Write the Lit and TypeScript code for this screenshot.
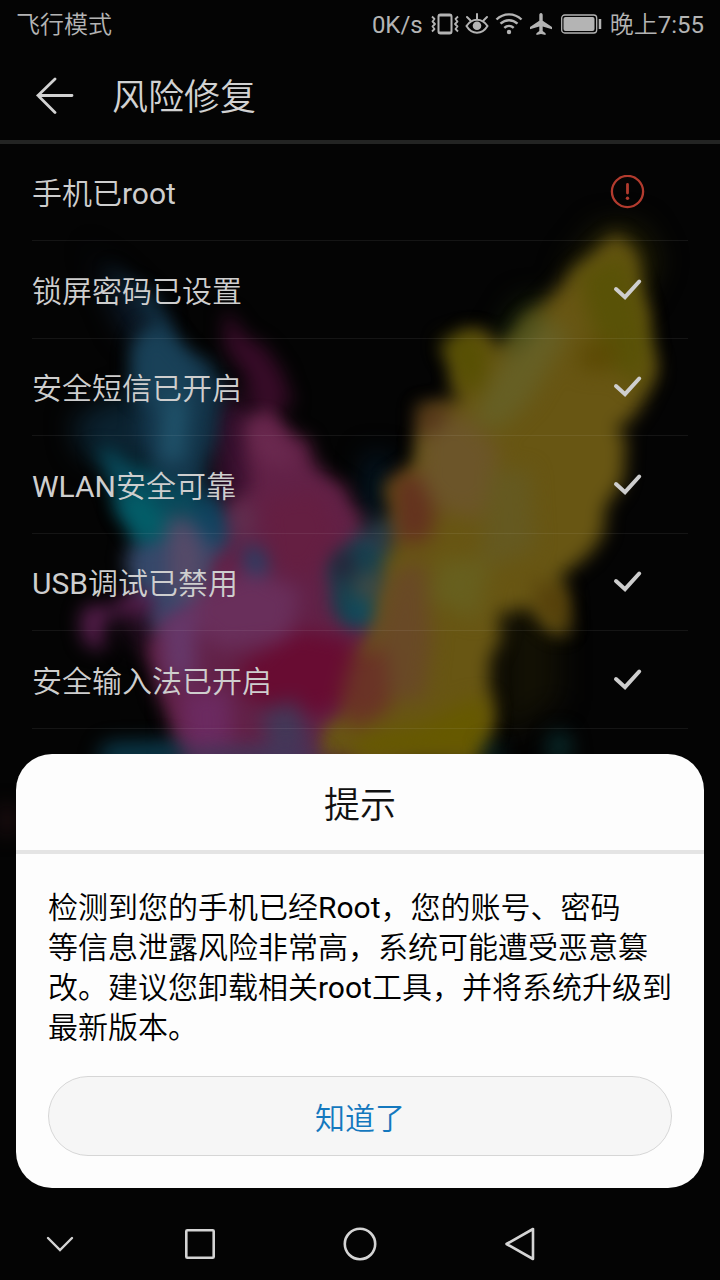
import { LitElement, html, css, svg } from "lit";
import { customElement, property, state } from "lit/decorators.js";

type Status = "ok" | "alert";

interface CheckItem {
  label: string;
  status: Status;
}

const ITEMS: CheckItem[] = [
  { label: "手机已root", status: "alert" },
  { label: "锁屏密码已设置", status: "ok" },
  { label: "安全短信已开启", status: "ok" },
  { label: "WLAN安全可靠", status: "ok" },
  { label: "USB调试已禁用", status: "ok" },
  { label: "安全输入法已开启", status: "ok" },
];

/* Powder-cloud wallpaper: [polygon points, colour] from back to front. */
const HAZE: [string, string][] = [
  ["86,236 98,262 130,290 158,318 150,350 125,330 112,300", "#0e1d2e"],
  ["73,419 110,400 150,390 210,420 205,460 120,470 80,450", "#0b2230"],
  ["215,400 250,400 270,480 250,520 214,500", "#3a1030"],
  ["366,455 388,455 388,520 366,520", "#031a2a"],
  ["600,225 640,225 660,260 640,300 560,300 570,262", "#1c1b05"],
  ["560,300 520,300 490,350 530,360", "#16200a"],
  ["500,600 560,620 560,700 500,740", "#121004"],
  ["120,600 160,600 170,650 130,640", "#2c1028"],
  ["170,520 330,500 400,560 430,700 400,770 180,770", "#5a2740"],
];

const BODY: [string, string][] = [
  ["108,270 130,284 171,317 178,345 211,366 217,398 205,450 205,500 158,500 136,400 134,350 146,325", "#133449"],
  ["93,444 112,446 150,475 199,483 215,520 225,550 171,548 138,545 113,501", "#08495a"],
  ["130,547 200,520 232,560 226,640 160,650 142,600 128,580", "#35486a"],
  ["228,312 262,350 285,377 291,409 262,412 250,400 232,352", "#360b27"],
  ["244,419 269,410 309,437 311,469 340,490 362,519 350,545 332,582 360,629 390,650 390,760 184,760 158,700 145,650 160,620 203,612 213,554 224,530 238,501 252,469", "#622147"],
  ["88,606 116,608 122,596 160,600 150,618 110,616 104,650 84,640", "#541d4a"],
  ["362,533 391,554 388,600 372,628 350,630 334,600 326,560", "#16404e"],
  ["611,240 634,250 640,285 652,335 662,370 650,398 620,420 630,469 611,501 591,554 565,575 569,636 554,636 530,614 500,606 495,660 490,713 478,760 316,760 334,716 367,642 391,572 390,483 416,462 418,408 460,404 454,362 440,342 473,333 493,352 518,324 550,296 587,261", "#685613"],
];

const DETAIL: [string, string][] = [
  ["142,330 165,330 200,370 191,405 183,465 158,462 162,412 134,391 132,356", "#194158"],
  ["163,400 188,400 184,462 160,462", "#20536b"],
  ["116,500 140,490 168,520 160,540 140,540", "#025f69"],
  ["198,488 216,496 228,535 214,550 200,520", "#0d4665"],
  ["168,520 186,515 206,555 196,600 168,590", "#564a68"],
  ["236,500 252,510 248,540 234,530", "#603552"],
  ["244,425 262,420 290,450 296,470 262,460", "#6b2a50"],
  ["262,500 320,490 340,530 310,580 270,570", "#651f42"],
  ["200,590 250,570 300,590 290,640 220,650 190,620", "#692f5b"],
  ["160,620 196,600 196,680 166,680", "#66386a"],
  ["240,665 300,630 350,640 366,690 320,715 270,710 240,690", "#680c32"],
  ["180,690 230,690 232,750 186,754", "#6b2a60"],
  ["262,710 296,700 312,745 270,756", "#433858"],
  ["243,546 260,550 268,570 252,576", "#0f4a6e"],
  ["334,555 350,550 352,575 336,580", "#2d1930"],
  ["352,600 370,604 370,622 352,622", "#0a5368"],
  ["370,520 388,520 390,545 372,548", "#28485a"],
  ["355,580 380,570 376,596 358,600", "#4a4c44"],
  ["440,342 473,331 490,350 482,390 462,392 452,362", "#575003"],
  ["518,330 540,310 548,330 520,370 504,360", "#34471d"],
  ["578,275 624,250 640,300 650,350 640,390 606,360 590,320", "#595207"],
  ["580,345 620,340 610,372 580,370", "#5c4a04"],
  ["497,370 540,320 570,330 530,400 500,430 472,420", "#665f24"],
  ["422,420 465,415 500,450 480,520 440,510 420,480", "#6c5529"],
  ["418,408 455,404 440,424 420,440", "#52301a"],
  ["392,480 416,470 436,510 430,540 398,545", "#64321f"],
  ["490,470 530,470 535,550 480,570", "#655920"],
  ["440,560 490,560 478,620 430,600", "#675f1e"],
  ["394,570 424,560 432,640 424,700 390,700 366,670 372,640", "#694926"],
  ["354,650 386,650 390,710 352,730 340,700", "#6a3326"],
  ["360,736 420,726 470,700 490,700 484,756 350,756", "#665900"],
  ["534,580 566,590 568,630 540,614", "#553f0a"],
];

const WISPS: [string, string][] = [
  ["106,744 180,742 186,764 96,764", "#0b4054"],
  ["186,750 300,746 330,764 190,764", "#3c3c60"],
  ["552,732 566,732 572,758 546,758", "#0a3030"],
  ["484,744 500,746 500,760 484,760", "#073238"],
  ["0,804 14,808 14,832 0,836", "#241014"],
];

@customElement("wallpaper-art")
export class WallpaperArt extends LitElement {
  static styles = css`
    :host {
      display: block;
    }
    .art {
      display: block;
      width: 100%;
      height: 100%;
    }
  `;

  render() {
    const poly = ([points, fill]: [string, string]) =>
      svg`<polygon points=${points} fill=${fill}></polygon>`;
    return html`
      <svg class="art" viewBox="0 0 720 1280" preserveAspectRatio="xMidYMin slice" aria-hidden="true">
        <defs>
          <filter id="haze" filterUnits="userSpaceOnUse" x="-40" y="160" width="800" height="740" color-interpolation-filters="sRGB">
            <feGaussianBlur stdDeviation="14"></feGaussianBlur>
          </filter>
          <filter id="cloud" filterUnits="userSpaceOnUse" x="-40" y="160" width="800" height="740" color-interpolation-filters="sRGB">
            <feTurbulence type="fractalNoise" baseFrequency="0.025" numOctaves="2" seed="4" result="noise"></feTurbulence>
            <feDisplacementMap in="SourceGraphic" in2="noise" scale="26" xChannelSelector="R" yChannelSelector="G"></feDisplacementMap>
            <feGaussianBlur stdDeviation="9"></feGaussianBlur>
          </filter>
          <filter id="tint" filterUnits="userSpaceOnUse" x="-40" y="160" width="800" height="740" color-interpolation-filters="sRGB">
            <feGaussianBlur stdDeviation="10"></feGaussianBlur>
          </filter>
        </defs>
        <rect width="720" height="1280" fill="#040404"></rect>
        <g filter="url(#haze)">${HAZE.map(poly)}</g>
        <g filter="url(#cloud)">${BODY.map(poly)}</g>
        <g filter="url(#tint)">${DETAIL.map(poly)}</g>
        <g filter="url(#tint)">${WISPS.map(poly)}</g>
      </svg>
    `;
  }
}

@customElement("status-bar")
export class StatusBar extends LitElement {
  static styles = css`
    :host {
      display: flex;
      justify-content: space-between;
      align-items: center;
      height: 48px;
      padding: 0 16px;
      font-size: 24px;
      line-height: 32px;
      color: #b4b4b4;
    }
    .text {
      padding-top: 2px;
    }
    .side {
      display: flex;
      align-items: center;
      gap: 8px;
    }
    .icons {
      display: flex;
      align-items: center;
      gap: 6px;
    }
    svg {
      display: block;
    }
  `;

  render() {
    return html`
      <span class="text">飞行模式</span>
      <div class="side">
        <span class="text">0K/s</span>
        <div class="icons">
          <svg width="28" height="24" viewBox="0 0 28 24" fill="none" stroke="currentColor" stroke-width="2" stroke-linejoin="round">
            <rect x="7.500" y="2.500" width="13" height="19" rx="2"></rect>
            <path d="M7.500 3.500h13M7.500 20.500h13"></path>
            <path d="M1 4.500l2.500 2.500L1.500 9.500 4 12l-2.500 2.500L3.500 17 1 19.500M27 4.500L24.500 7l2 2.500L24 12l2.500 2.500-2 2.500 2.500 2.500" stroke-width="1.800"></path>
          </svg>
          <svg width="24" height="24" viewBox="0 0 24 24" fill="none" stroke="currentColor" stroke-width="2" stroke-linecap="round">
            <path d="M1.500 14C4.500 9.500 8 7.800 12 7.800S19.500 9.500 22.500 14C19.500 19 16 20.700 12 20.700S4.500 19 1.500 14z"></path>
            <circle cx="12" cy="13.800" r="4.300" fill="currentColor" stroke="none"></circle>
            <path d="M12 7V2M5.500 8.500L2 5M18.500 8.500L22 5"></path>
          </svg>
          <svg width="28" height="24" viewBox="0 0 28 24" fill="none" stroke="currentColor" stroke-width="2.400">
            <path d="M1.500 7.500C8.500 .6 19.500 .6 26.500 7.500M5.500 11.700C10.500 7 17.500 7 22.500 11.700M9.300 15.800C12 13.300 16 13.300 18.700 15.800"></path>
            <circle cx="14" cy="20" r="2.200" fill="currentColor" stroke="none"></circle>
          </svg>
          <svg width="24" height="24" viewBox="0 0 24 24" fill="currentColor">
            <path d="M12 1c-1.200 0-1.700 1-1.700 2.200v5.600L1 15v2.200l9.300-2.700v4.600L7.400 21.300V23L12 21.900 16.600 23v-1.700l-2.900-2.200v-4.600L23 17.200V15l-9.300-6.200V3.200C13.700 2 13.200 1 12 1z"></path>
          </svg>
        </div>
        <svg width="41" height="20" viewBox="0 0 41 20" fill="none" stroke="currentColor">
          <rect x=".7" y="1" width="35" height="18" rx="3" stroke-width="1.300"></rect>
          <rect x="2.500" y="3" width="31" height="14" rx="2" fill="currentColor" stroke="none"></rect>
          <path d="M39 5v10" stroke-width="2.500"></path>
        </svg>
        <span class="text">晚上7:55</span>
      </div>
    `;
  }
}

@customElement("check-row")
export class CheckRow extends LitElement {
  @property() label = "";
  @property() status: Status = "ok";

  static styles = css`
    :host {
      display: flex;
      align-items: center;
      justify-content: space-between;
      box-sizing: border-box;
      height: 100%;
      padding-right: 43px;
      border-bottom: 1px solid rgba(255, 255, 255, 0.07);
      font-size: 30px;
      line-height: 40px;
      color: #cecece;
    }
    .label {
      padding-top: 4px;
    }
    svg {
      display: block;
    }
    .alert {
      color: #b23b2e;
    }
  `;

  render() {
    return html`
      <span class="label">${this.label}</span>
      ${this.status === "alert"
        ? html`<svg class="alert" width="35" height="34" viewBox="0 0 35 34" role="img" aria-label="有风险">
            <circle cx="17.500" cy="16.500" r="15.600" fill="none" stroke="currentColor" stroke-width="2.300"></circle>
            <path d="M17.500 9.500v8.500" stroke="currentColor" stroke-width="2.800" stroke-linecap="round"></path>
            <circle cx="17.500" cy="23.300" r="1.700" fill="currentColor"></circle>
          </svg>`
        : html`<svg width="35" height="34" viewBox="0 0 35 34" role="img" aria-label="正常">
            <path d="M6 16l9 8.200L29.200 8.500" fill="none" stroke="currentColor" stroke-width="4" stroke-linecap="round"></path>
          </svg>`}
    `;
  }
}

@customElement("tip-dialog")
export class TipDialog extends LitElement {
  static styles = css`
    :host {
      display: block;
      background: #fdfdfd;
      border-radius: 36px;
      color: #111;
      overflow: hidden;
    }
    .title {
      margin: 0;
      padding: 28px 0 20px;
      border-bottom: 4px solid #e4e4e4;
      font-size: 36px;
      font-weight: inherit;
      line-height: 48px;
      text-align: center;
    }
    .body {
      display: flex;
      flex-direction: column;
      gap: 28px;
      padding: 34px 32px 32px;
    }
    .message {
      margin: 0;
      font-size: 30px;
      line-height: 40px;
      color: #000;
    }
    .confirm {
      height: 80px;
      padding: 0;
      border: 1px solid #d6d6d6;
      border-radius: 40px;
      background: #f6f6f6;
      color: #1478be;
      font: inherit;
      font-size: 30px;
      cursor: pointer;
    }
  `;

  private confirm() {
    this.dispatchEvent(new CustomEvent("confirm"));
  }

  render() {
    return html`
      <h2 class="title">提示</h2>
      <div class="body">
        <p class="message">
          检测到您的手机已经Root，您的账号、密码<br />等信息泄露风险非常高，系统可能遭受恶意篡改。建议您卸载相关root工具，并将系统升级到最新版本。
        </p>
        <button class="confirm" type="button" @click=${this.confirm}>知道了</button>
      </div>
    `;
  }
}

@customElement("nav-bar")
export class NavBar extends LitElement {
  static styles = css`
    :host {
      display: grid;
      grid-template-columns: 3fr 4fr 4fr 4fr 3fr;
      height: 72px;
      color: #d4d4d4;
    }
    button {
      display: grid;
      place-items: center;
      padding: 0;
      border: 0;
      background: none;
      color: inherit;
    }
  `;

  render() {
    return html`
      <button type="button" aria-label="收起">
        <svg width="36" height="36" viewBox="0 0 36 36" fill="none" stroke="currentColor" stroke-width="2.400" stroke-linecap="round">
          <path d="M6 12l12 12 12-12"></path>
        </svg>
      </button>
      <button type="button" aria-label="最近任务">
        <svg width="36" height="36" viewBox="0 0 36 36" fill="none" stroke="currentColor" stroke-width="2.600">
          <rect x="4.300" y="4.300" width="27.400" height="27.400" rx="1"></rect>
        </svg>
      </button>
      <button type="button" aria-label="主页">
        <svg width="36" height="36" viewBox="0 0 36 36" fill="none" stroke="currentColor" stroke-width="2.600">
          <circle cx="18" cy="18" r="15.200"></circle>
        </svg>
      </button>
      <button type="button" aria-label="返回">
        <svg width="36" height="36" viewBox="0 0 36 36" fill="none" stroke="currentColor" stroke-width="2.600" stroke-linejoin="round">
          <path d="M31 3v30L4.500 18z"></path>
        </svg>
      </button>
    `;
  }
}

@customElement("app-root")
export class AppRoot extends LitElement {
  @state() private dialogOpen = true;

  static styles = css`
    :host {
      display: flex;
      flex-direction: column;
      position: relative;
      min-height: 100vh;
      background: #040404;
      overflow: hidden;
      font-family: Roboto, "Noto Sans CJK SC DemiLight", "Noto Sans CJK SC", sans-serif;
      font-weight: 400;
    }
    .wallpaper {
      position: absolute;
      inset: 0;
    }
    .page {
      position: relative;
      display: flex;
      flex-direction: column;
      flex: 1;
    }
    .header {
      display: flex;
      align-items: center;
      gap: 36px;
      height: 92px;
      padding: 0 32px;
      border-bottom: 4px solid #232423;
      color: #d2d2d2;
    }
    .back {
      padding: 0;
      border: 0;
      background: none;
      color: inherit;
    }
    .back svg {
      display: block;
    }
    .heading {
      margin: 0;
      padding-top: 8px;
      font-size: 36px;
      font-weight: inherit;
      line-height: 48px;
    }
    .list {
      flex: 1;
      margin: 0;
      padding: 0 32px;
      list-style: none;
    }
    .item {
      height: 97px;
    }
    .item:nth-child(even) {
      height: 98px;
    }
    .dialog {
      position: absolute;
      left: 16px;
      right: 16px;
      bottom: 92px;
    }
  `;

  render() {
    return html`
      <wallpaper-art class="wallpaper"></wallpaper-art>
      <div class="page">
        <status-bar></status-bar>
        <header class="header">
          <button class="back" type="button" aria-label="返回">
            <svg width="44" height="40" viewBox="0 0 44 40" fill="none" stroke="currentColor" stroke-width="2.800" stroke-linecap="round">
              <path d="M6 21.500h34M23 5L6 21.500 23 38.500"></path>
            </svg>
          </button>
          <h1 class="heading">风险修复</h1>
        </header>
        <ul class="list">
          ${ITEMS.map(
            (item) => html`<li class="item"><check-row .label=${item.label} .status=${item.status}></check-row></li>`
          )}
        </ul>
        <nav-bar></nav-bar>
      </div>
      ${this.dialogOpen
        ? html`<tip-dialog class="dialog" role="dialog" aria-label="提示" @confirm=${() => (this.dialogOpen = false)}></tip-dialog>`
        : null}
    `;
  }
}
